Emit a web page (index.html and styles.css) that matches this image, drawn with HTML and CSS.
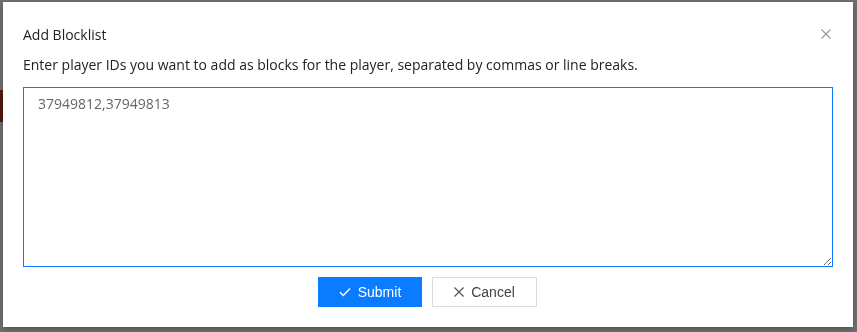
FILE: index.html
```html
<!DOCTYPE html>
<html lang="en">
<head>
    <meta charset="UTF-8">
    <meta name="viewport" content="width=device-width, initial-scale=1.0">
    <title>Add Blocklist</title>
    <link rel="stylesheet" href="styles.css">
</head>
<body>

    <div class="page">
        <div class="page-tag"></div>
    </div>

    <div class="overlay">
        <div class="modal">
            <div class="modal-header">
                <h3>Add Blocklist</h3>
                <button class="close-btn" aria-label="Close">
                    <svg width="10" height="10" viewBox="0 0 10 10">
                        <path d="M0.5 0.5L9.5 9.5M9.5 0.5L0.5 9.5" stroke="#999" stroke-width="1.1" fill="none"/>
                    </svg>
                </button>
            </div>
            <p class="hint">Enter player IDs you want to add as blocks for the player, separated by commas or line breaks.</p>
            <textarea class="ids-input">37949812,37949813</textarea>
            <div class="modal-footer">
                <button class="btn btn-primary">
                    <svg width="12" height="10" viewBox="0 0 12 10">
                        <path d="M1 5.2L4.3 8.5L11 1.5" stroke="#fff" stroke-width="1.4" fill="none"/>
                    </svg>
                    Submit
                </button>
                <button class="btn btn-default">
                    <svg width="10" height="10" viewBox="0 0 10 10">
                        <path d="M0.5 0.5L9.5 9.5M9.5 0.5L0.5 9.5" stroke="#555" stroke-width="1.2" fill="none"/>
                    </svg>
                    Cancel
                </button>
            </div>
        </div>
    </div>

</body>
</html>
```

FILE: styles.css
```css
body {
    margin: 0;
    padding: 0;
    font-family: "Open Sans", Arial, sans-serif;
    background-color: #fff;
}

.page {
    height: 332px;
    padding-top: 90px;
    box-sizing: border-box;
}

.page-tag {
    width: 40px;
    height: 32px;
    background-color: #c0392b;
}

.overlay {
    position: fixed;
    top: 0;
    left: 0;
    right: 0;
    bottom: 0;
    background-color: rgba(0, 0, 0, 0.56);
    padding: 2px 4px 0 3px;
}

.modal {
    background-color: #fff;
    height: 325px;
    box-sizing: border-box;
    padding: 22px 20px 0 20px;
    box-shadow: 0 2px 6px rgba(0, 0, 0, 0.3);
}

.modal-header {
    display: flex;
    justify-content: space-between;
    align-items: center;
    height: 20px;
}

.modal-header h3 {
    margin: 0;
    font-size: 14px;
    font-weight: normal;
    color: #222;
}

.close-btn {
    border: none;
    background: none;
    padding: 0;
    margin-right: 2px;
    display: flex;
    cursor: pointer;
}

.hint {
    margin: 11px 0 0 0;
    font-size: 14px;
    line-height: 20px;
    color: #222;
}

.ids-input {
    display: block;
    width: 100%;
    height: 180px;
    box-sizing: border-box;
    margin-top: 12px;
    padding: 6px 14px;
    border: 1px solid #0a78ff;
    outline: none;
    font-family: "Open Sans", Arial, sans-serif;
    font-size: 14px;
    line-height: 20px;
    color: #666;
    resize: vertical;
}

.modal-footer {
    display: flex;
    justify-content: center;
    gap: 10px;
    margin-top: 10px;
    padding-right: 1px;
}

.btn {
    display: flex;
    align-items: center;
    justify-content: center;
    gap: 7px;
    height: 30px;
    box-sizing: border-box;
    font-family: "Liberation Sans", Arial, sans-serif;
    font-size: 14px;
    cursor: pointer;
}

.btn-primary {
    width: 104px;
    background-color: #0a7cff;
    border: 1px solid #0a7cff;
    color: #fff;
}

.btn-default {
    width: 105px;
    background-color: #fff;
    border: 1px solid #dcdcdc;
    color: #444;
}
```
